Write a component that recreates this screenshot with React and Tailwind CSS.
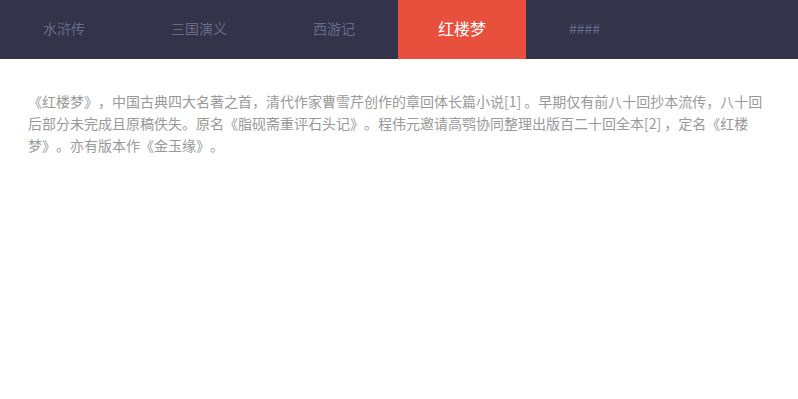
import React, { useState } from 'react';

const tabs = [
  { id: 'shz', name: '水浒传' },
  { id: 'sgyy', name: '三国演义' },
  { id: 'xyj', name: '西游记' },
  { id: 'hlm', name: '红楼梦' },
  { id: 'more', name: '####' },
];

const content = {
  hlm: '《红楼梦》，中国古典四大名著之首，清代作家曹雪芹创作的章回体长篇小说[1] 。早期仅有前八十回抄本流传，八十回后部分未完成且原稿佚失。原名《脂砚斋重评石头记》。程伟元邀请高鹗协同整理出版百二十回全本[2] ，定名《红楼梦》。亦有版本作《金玉缘》。',
};

export default function App() {
  const [active, setActive] = useState('hlm');

  return (
    <div className="min-h-screen bg-white" style={{ fontFamily: '"Noto Sans CJK SC", "Liberation Sans", sans-serif' }}>
      {/* 顶部标签栏 */}
      <div className="flex h-[59px] bg-[#33344a]">
        {tabs.map((tab) => (
          <button
            key={tab.id}
            onClick={() => setActive(tab.id)}
            className={`flex items-center pb-1 leading-none ${
              tab.id === active
                ? 'bg-[#e94f3d] text-white text-base px-[40px]'
                : 'text-[#676b88] text-sm px-[43px]'
            }`}
          >
            {tab.name}
          </button>
        ))}
      </div>

      {/* 内容 */}
      <div className="px-7 pt-[31px] text-sm leading-[22px] text-[#999999] [text-spacing-trim:space-all]">
        <p>{content[active] || ''}</p>
      </div>
    </div>
  );
}
